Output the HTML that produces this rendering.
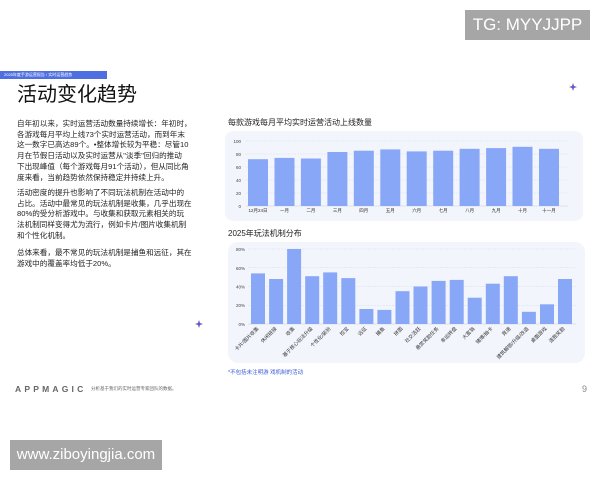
<!DOCTYPE html>
<html><head><meta charset="utf-8"><style>
*{margin:0;padding:0;box-sizing:border-box}
body{width:600px;height:480px;background:#fff;position:relative;overflow:hidden;font-family:"Liberation Sans","Noto Sans CJK SC",sans-serif;color:#222}
.a{position:absolute}
.p{font-size:7.6px;line-height:10.7px;left:17px;color:#222;white-space:nowrap}
</style></head><body>
<div class="a" style="left:465px;top:10px;width:125px;height:30px;background:#a6a6a6;color:#fff;font-size:17px;line-height:30px;text-align:center">TG: MYYJJPP</div>
<div class="a" style="left:0;top:71px;width:107px;height:8px;background:#4f6fe0;color:#fff;font-size:4px;line-height:8px;padding-left:4px;white-space:nowrap;overflow:hidden">2025年度手游运营报告 / 实时运营趋势</div>
<div class="a" style="left:17px;top:82px;font-size:20px;line-height:26px;color:#111">活动变化趋势</div>
<div class="a p" style="top:119px">自年初以来，实时运营活动数量持续增长：年初时，<br>各游戏每月平均上线73个实时运营活动，而到年末<br>这一数字已高达89个。•整体增长较为平稳：尽管10<br>月在节假日活动以及实时运营从"淡季"回归的推动<br>下出现峰值（每个游戏每月91个活动），但从同比角<br>度来看，当前趋势依然保持稳定并持续上升。</div>
<div class="a p" style="top:188px">活动密度的提升也影响了不同玩法机制在活动中的<br>占比。活动中最常见的玩法机制是收集，几乎出现在<br>80%的受分析游戏中。与收集和获取元素相关的玩<br>法机制同样变得尤为流行，例如卡片/图片收集机制<br>和个性化机制。</div>
<div class="a p" style="top:248px">总体来看，最不常见的玩法机制是捕鱼和远征，其在<br>游戏中的覆盖率均低于20%。</div>
<div class="a" style="left:228px;top:117px;font-size:8px;color:#222">每款游戏每月平均实时运营活动上线数量</div>
<div class="a" style="left:228px;top:228px;font-size:8px;color:#222">2025年玩法机制分布</div>
<div class="a" style="left:228px;top:368px;font-size:5.5px;color:#3b5bd6">*不包括未注明游 戏机制的活动</div>
<svg class="a" style="left:0;top:0" width="600" height="480" font-family="Liberation Sans,Noto Sans CJK SC,sans-serif">
<rect x="225" y="131" width="358" height="90" rx="8" fill="#f2f5fc"/>
<rect x="228" y="242" width="357" height="121" rx="10" fill="#f2f5fc"/>
<g stroke="#d8dde8" stroke-width="0.6" stroke-dasharray="2,1">
<line x1="246" x2="568" y1="141" y2="141"/><line x1="246" x2="568" y1="154" y2="154"/><line x1="246" x2="568" y1="167" y2="167"/><line x1="246" x2="568" y1="180" y2="180"/><line x1="246" x2="568" y1="193" y2="193"/>
<line x1="248" x2="576" y1="249" y2="249"/><line x1="248" x2="576" y1="267.75" y2="267.75"/><line x1="248" x2="576" y1="286.5" y2="286.5"/><line x1="248" x2="576" y1="305.25" y2="305.25"/>
</g>
<line x1="246" x2="568" y1="206" y2="206" stroke="#c8cede" stroke-width="0.6"/>
<line x1="248" x2="576" y1="324" y2="324" stroke="#c8cede" stroke-width="0.6"/>
<g font-size="4.5" fill="#444" text-anchor="end">
<text x="241" y="143">100</text><text x="241" y="156">80</text><text x="241" y="169">60</text><text x="241" y="182">40</text><text x="241" y="195">20</text><text x="241" y="208">0</text>
<text x="245" y="251">80%</text><text x="245" y="270">60%</text><text x="245" y="288.5">40%</text><text x="245" y="307">20%</text><text x="245" y="326">0%</text>
</g>
<g fill="#89a7f7">
<rect x="248" y="159.2" width="20" height="46.8"/><rect x="274.5" y="157.9" width="20" height="48.1"/><rect x="300.9" y="158.5" width="20" height="47.5"/><rect x="327.4" y="152" width="20" height="54"/><rect x="353.8" y="150.7" width="20" height="55.3"/><rect x="380.3" y="149.4" width="20" height="56.6"/><rect x="406.7" y="151.4" width="20" height="54.6"/><rect x="433.2" y="150.7" width="20" height="55.3"/><rect x="459.6" y="148.8" width="20" height="57.2"/><rect x="486.1" y="148.1" width="20" height="57.9"/><rect x="512.5" y="146.8" width="20" height="59.2"/><rect x="539" y="148.8" width="20" height="57.2"/>
<rect x="251" y="273.4" width="14" height="50.6"/><rect x="269.1" y="279" width="14" height="45"/><rect x="287.1" y="249" width="14" height="75"/><rect x="305.2" y="276.2" width="14" height="47.8"/><rect x="323.2" y="272.4" width="14" height="51.6"/><rect x="341.3" y="278.1" width="14" height="45.9"/><rect x="359.4" y="309" width="14" height="15"/><rect x="377.4" y="309.9" width="14" height="14.1"/><rect x="395.5" y="291.2" width="14" height="32.8"/><rect x="413.5" y="286.5" width="14" height="37.5"/><rect x="431.6" y="280.9" width="14" height="43.1"/><rect x="449.7" y="279.9" width="14" height="44.1"/><rect x="467.7" y="297.7" width="14" height="26.3"/><rect x="485.8" y="283.7" width="14" height="40.3"/><rect x="503.8" y="276.2" width="14" height="47.8"/><rect x="521.9" y="311.8" width="14" height="12.2"/><rect x="540" y="304.3" width="14" height="19.7"/><rect x="558" y="279" width="14" height="45"/>
</g>
<g font-size="4.5" fill="#333" text-anchor="middle">
<text x="258" y="212">12月24日</text><text x="284.5" y="212">一月</text><text x="310.9" y="212">二月</text><text x="337.4" y="212">三月</text><text x="363.8" y="212">四月</text><text x="390.3" y="212">五月</text><text x="416.7" y="212">六月</text><text x="443.2" y="212">七月</text><text x="469.6" y="212">八月</text><text x="496.1" y="212">九月</text><text x="522.5" y="212">十月</text><text x="549" y="212">十一月</text>
</g>
<g font-size="5" fill="#333" text-anchor="end">
<text transform="translate(259,329) rotate(-45)">卡片/图片收集</text>
<text transform="translate(277,329) rotate(-45)">休闲链接</text>
<text transform="translate(295,329) rotate(-45)">收集</text>
<text transform="translate(313,329) rotate(-45)">基于核心玩法升级</text>
<text transform="translate(331,329) rotate(-45)">个性化/装扮</text>
<text transform="translate(349,329) rotate(-45)">挖宝</text>
<text transform="translate(367,329) rotate(-45)">远征</text>
<text transform="translate(385,329) rotate(-45)">捕鱼</text>
<text transform="translate(403,329) rotate(-45)">拼图</text>
<text transform="translate(421,329) rotate(-45)">社交活跃</text>
<text transform="translate(439,329) rotate(-45)">悬赏奖励任务</text>
<text transform="translate(457,329) rotate(-45)">幸运转盘</text>
<text transform="translate(475,329) rotate(-45)">大富翁</text>
<text transform="translate(493,329) rotate(-45)">赌博/抽卡</text>
<text transform="translate(511,329) rotate(-45)">竞速</text>
<text transform="translate(529,329) rotate(-45)">建筑解锁/升级/改造</text>
<text transform="translate(547,329) rotate(-45)">桌面游戏</text>
<text transform="translate(565,329) rotate(-45)">连胜奖励</text>
</g>
<g fill="#6a55c8">
<path d="M573 83 L574 86 L577 87 L574 88 L573 91 L572 88 L569 87 L572 86Z"/>
<path d="M199 320 L200 323 L203 324 L200 325 L199 328 L198 325 L195 324 L198 323Z"/>
</g>
</svg>
<div class="a" style="left:15px;top:384px;font-size:8.5px;letter-spacing:3.2px;color:#666;font-weight:bold">APPMAGIC</div>
<div class="a" style="left:91px;top:386px;font-size:4.5px;color:#666">分析基于我们的实时运营专家团队的数据。</div>
<div class="a" style="left:582px;top:384px;font-size:9px;color:#888">9</div>
<div class="a" style="left:10px;top:440px;width:152px;height:30px;background:#a6a6a6;color:#fff;font-size:15px;line-height:30px;text-align:center">www.ziboyingjia.com</div>
</body></html>
